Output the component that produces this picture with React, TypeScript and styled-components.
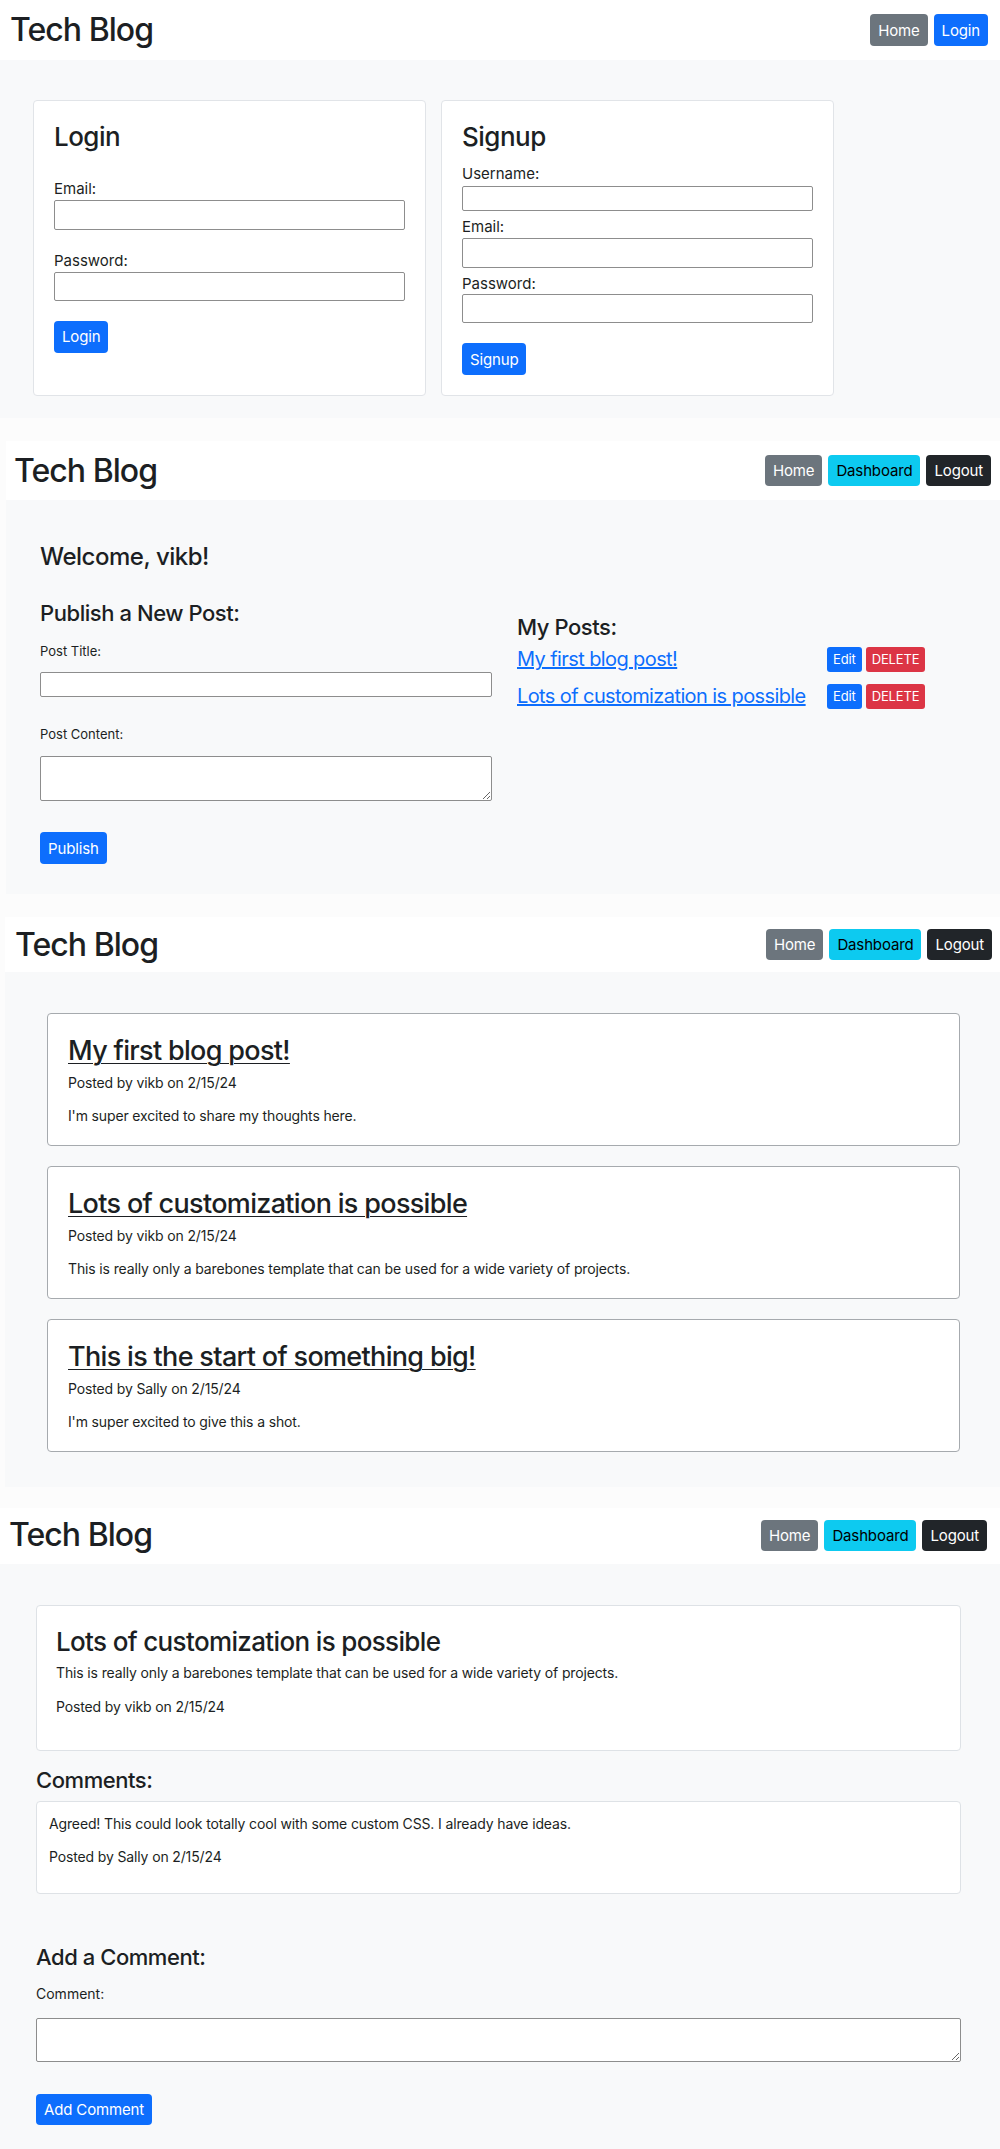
import React from 'react'
import styled, { createGlobalStyle, css } from 'styled-components'

const GlobalStyle = createGlobalStyle`
  * { box-sizing: border-box; }
  body {
    margin: 0;
    background: #fcfcfc;
    font-family: Inter, "Noto Sans", sans-serif;
    color: #1c1f23;
  }
`

type Variant = 'primary' | 'secondary' | 'info' | 'dark' | 'danger'

const variants: Record<Variant, { bg: string; fg: string }> = {
  primary: { bg: '#0d6efd', fg: '#fff' },
  secondary: { bg: '#6c757d', fg: '#fff' },
  info: { bg: '#0dcaf0', fg: '#000' },
  dark: { bg: '#212529', fg: '#fff' },
  danger: { bg: '#dc3545', fg: '#fff' },
}

const Screen = styled.section<{ $inset: number; $gap: number }>`
  margin-left: ${p => p.$inset}px;
  margin-top: ${p => p.$gap}px;
`

const Header = styled.header<{ $h: number; $pl: number; $pr: number }>`
  display: flex;
  align-items: center;
  justify-content: space-between;
  height: ${p => p.$h}px;
  padding: 0 ${p => p.$pr}px 0 ${p => p.$pl}px;
  background: #fff;
`

const Brand = styled.h1`
  margin: 0;
  font-size: 32px;
  font-weight: 450;
  line-height: 1.2;
  letter-spacing: -0.03em;
`

const Nav = styled.nav`
  display: flex;
  gap: 6px;
`

const Button = styled.button<{ $variant?: Variant; $h?: number; $small?: boolean }>`
  display: inline-flex;
  align-items: center;
  justify-content: center;
  height: ${p => p.$h ?? 32}px;
  padding: 0 ${p => (p.$small ? 6 : 8)}px;
  border: 0;
  border-radius: ${p => (p.$small ? 3 : 4)}px;
  font-family: inherit;
  font-size: ${p => (p.$small ? 13 : 15)}px;
  font-weight: 400;
  letter-spacing: -0.01em;
  background: ${p => variants[p.$variant ?? 'primary'].bg};
  color: ${p => variants[p.$variant ?? 'primary'].fg};
  cursor: pointer;
`

const Main = styled.main<{ $pad: string }>`
  background: #f8f9fa;
  padding: ${p => p.$pad};
`

/* ---------- panel 1: login / signup ---------- */

const CardRow = styled.div`
  display: flex;
  gap: 15px;
`

const FormCard = styled.div`
  width: 393px;
  background: #fff;
  border: 1px solid #e1e4e8;
  border-radius: 4px;
  padding: 20px;
`

const CardTitle = styled.h2<{ $size: number }>`
  margin: 0;
  font-size: ${p => p.$size}px;
  font-weight: 450;
  line-height: 1.2;
  letter-spacing: -0.02em;
`

const Field = styled.div<{ $mt: number }>`
  margin-top: ${p => p.$mt}px;
`

const Label = styled.label<{ $size?: number; $mt?: number }>`
  display: block;
  margin-top: ${p => p.$mt ?? 0}px;
  font-size: ${p => p.$size ?? 15}px;
  font-weight: 400;
  line-height: 1.45;
`

const fieldBox = css`
  display: block;
  width: 100%;
  border: 1px solid #8d8d8d;
  border-radius: 2px;
  background: #fff;
  font-family: inherit;
`

const Input = styled.input<{ $h: number; $mt?: number }>`
  ${fieldBox};
  height: ${p => p.$h}px;
  margin-top: ${p => p.$mt ?? 0}px;
`

const TextArea = styled.textarea<{ $h: number; $mt?: number }>`
  ${fieldBox};
  height: ${p => p.$h}px;
  margin-top: ${p => p.$mt ?? 0}px;
  resize: vertical;
`

const ActionRow = styled.div<{ $mt: number }>`
  margin-top: ${p => p.$mt}px;
`

/* ---------- panel 2: dashboard ---------- */

const Columns = styled.div`
  display: grid;
  grid-template-columns: 452px 1fr;
  column-gap: 25px;
  margin-top: 28px;
`

const SubTitle = styled.h3<{ $mt?: number }>`
  margin: ${p => p.$mt ?? 0}px 0 0;
  font-size: 22px;
  font-weight: 450;
  line-height: 1.2;
  letter-spacing: -0.02em;
`

const PostList = styled.ul`
  list-style: none;
  margin: 6px 0 0;
  padding: 0;
  display: flex;
  flex-direction: column;
  gap: 12px;
`

const PostRow = styled.li`
  display: flex;
  align-items: center;
  height: 25px;
`

const PostLink = styled.a`
  flex: 0 0 310px;
  font-size: 20px;
  font-weight: 400;
  line-height: 1.2;
  letter-spacing: -0.03em;
  color: #0d6efd;
  text-decoration: underline;
`

const RowActions = styled.div`
  display: flex;
  gap: 4px;
`

/* ---------- panel 3: home feed ---------- */

const Feed = styled.div`
  display: flex;
  flex-direction: column;
  gap: 20px;
`

const PostCard = styled.article`
  background: #fff;
  border: 1px solid #a6aaae;
  border-radius: 4px;
  padding: 20px 20px 19px;
`

const PostTitle = styled.a`
  display: inline-block;
  font-size: 27px;
  font-weight: 450;
  line-height: 1.25;
  letter-spacing: -0.025em;
  color: #1c1f23;
  text-decoration: underline;
  text-decoration-thickness: 1px;
  text-underline-offset: 3px;
`

const Text = styled.p<{ $mt: number }>`
  margin: ${p => p.$mt}px 0 0;
  font-size: 14px;
  font-weight: 400;
  line-height: 21px;
  letter-spacing: -0.01em;
`

/* ---------- panel 4: single post ---------- */

const DetailCard = styled.div<{ $pad: string; $mt?: number }>`
  background: #fff;
  border: 1px solid #dee2e6;
  border-radius: 4px;
  padding: ${p => p.$pad};
  margin-top: ${p => p.$mt ?? 0}px;
`

const DetailTitle = styled.h2`
  margin: 0;
  font-size: 26px;
  font-weight: 450;
  line-height: 1.2;
  letter-spacing: -0.025em;
`

type NavItem = { label: string; variant: Variant }

const TopBar: React.FC<{ items: NavItem[]; h: number; pl: number; pr: number; btnH: number }> = ({
  items,
  h,
  pl,
  pr,
  btnH,
}) => (
  <Header $h={h} $pl={pl} $pr={pr}>
    <Brand>Tech Blog</Brand>
    <Nav>
      {items.map(item => (
        <Button key={item.label} $variant={item.variant} $h={btnH}>
          {item.label}
        </Button>
      ))}
    </Nav>
  </Header>
)

const loggedIn: NavItem[] = [
  { label: 'Home', variant: 'secondary' },
  { label: 'Dashboard', variant: 'info' },
  { label: 'Logout', variant: 'dark' },
]

const myPosts = ['My first blog post!', 'Lots of customization is possible']

const feed = [
  {
    title: 'My first blog post!',
    author: 'vikb',
    body: "I'm super excited to share my thoughts here.",
  },
  {
    title: 'Lots of customization is possible',
    author: 'vikb',
    body: 'This is really only a barebones template that can be used for a wide variety of projects.',
  },
  {
    title: 'This is the start of something big!',
    author: 'Sally',
    body: "I'm super excited to give this a shot.",
  },
]

export default function App() {
  return (
    <>
      <GlobalStyle />

      <Screen $inset={0} $gap={0}>
        <TopBar
          h={60}
          pl={10}
          pr={12}
          btnH={32}
          items={[
            { label: 'Home', variant: 'secondary' },
            { label: 'Login', variant: 'primary' },
          ]}
        />
        <Main $pad="40px 0 22px 33px">
          <CardRow>
            <FormCard>
              <CardTitle $size={26}>Login</CardTitle>
              <Field $mt={26}>
                <Label>Email:</Label>
                <Input $h={30} type="email" />
              </Field>
              <Field $mt={20}>
                <Label>Password:</Label>
                <Input $h={29} type="password" />
              </Field>
              <ActionRow $mt={20}>
                <Button>Login</Button>
              </ActionRow>
            </FormCard>
            <FormCard>
              <CardTitle $size={26}>Signup</CardTitle>
              <Field $mt={11}>
                <Label>Username:</Label>
                <Input $h={25} $mt={1} type="text" />
              </Field>
              <Field $mt={5}>
                <Label>Email:</Label>
                <Input $h={30} type="email" />
              </Field>
              <Field $mt={5}>
                <Label>Password:</Label>
                <Input $h={29} type="password" />
              </Field>
              <ActionRow $mt={20}>
                <Button>Signup</Button>
              </ActionRow>
            </FormCard>
          </CardRow>
        </Main>
      </Screen>

      <Screen $inset={6} $gap={23}>
        <TopBar h={59} pl={8} pr={9} btnH={31} items={loggedIn} />
        <Main $pad="43px 0 30px 34px">
          <CardTitle $size={24}>Welcome, vikb!</CardTitle>
          <Columns>
            <div>
              <SubTitle>Publish a New Post:</SubTitle>
              <Label $size={13} $mt={15}>
                Post Title:
              </Label>
              <Input $h={25} $mt={12} type="text" />
              <Label $size={13} $mt={28}>
                Post Content:
              </Label>
              <TextArea $h={45} $mt={12} />
              <ActionRow $mt={31}>
                <Button>Publish</Button>
              </ActionRow>
            </div>
            <div>
              <SubTitle $mt={14}>My Posts:</SubTitle>
              <PostList>
                {myPosts.map(title => (
                  <PostRow key={title}>
                    <PostLink href="#">{title}</PostLink>
                    <RowActions>
                      <Button $small $h={25}>
                        Edit
                      </Button>
                      <Button $small $h={25} $variant="danger">
                        DELETE
                      </Button>
                    </RowActions>
                  </PostRow>
                ))}
              </PostList>
            </div>
          </Columns>
        </Main>
      </Screen>

      <Screen $inset={5} $gap={23}>
        <TopBar h={55} pl={10} pr={8} btnH={31} items={loggedIn} />
        <Main $pad="41px 40px 35px 42px">
          <Feed>
            {feed.map(post => (
              <PostCard key={post.title}>
                <PostTitle href="#">{post.title}</PostTitle>
                <Text $mt={4}>Posted by {post.author} on 2/15/24</Text>
                <Text $mt={12}>{post.body}</Text>
              </PostCard>
            ))}
          </Feed>
        </Main>
      </Screen>

      <Screen $inset={0} $gap={21}>
        <TopBar h={56} pl={9} pr={13} btnH={31} items={loggedIn} />
        <Main $pad="41px 39px 27px 36px">
          <DetailCard $pad="20px 19px 33px">
            <DetailTitle>Lots of customization is possible</DetailTitle>
            <Text $mt={5}>
              This is really only a barebones template that can be used for a wide variety of projects.
            </Text>
            <Text $mt={13}>Posted by vikb on 2/15/24</Text>
          </DetailCard>
          <SubTitle $mt={16}>Comments:</SubTitle>
          <DetailCard $pad="11px 12px 26px" $mt={8}>
            <Text $mt={0}>Agreed! This could look totally cool with some custom CSS. I already have ideas.</Text>
            <Text $mt={12}>Posted by Sally on 2/15/24</Text>
          </DetailCard>
          <SubTitle $mt={50}>Add a Comment:</SubTitle>
          <Label $size={14} $mt={13}>
            Comment:
          </Label>
          <TextArea $h={44} $mt={14} />
          <ActionRow $mt={32}>
            <Button $h={31}>Add Comment</Button>
          </ActionRow>
        </Main>
      </Screen>
    </>
  )
}
